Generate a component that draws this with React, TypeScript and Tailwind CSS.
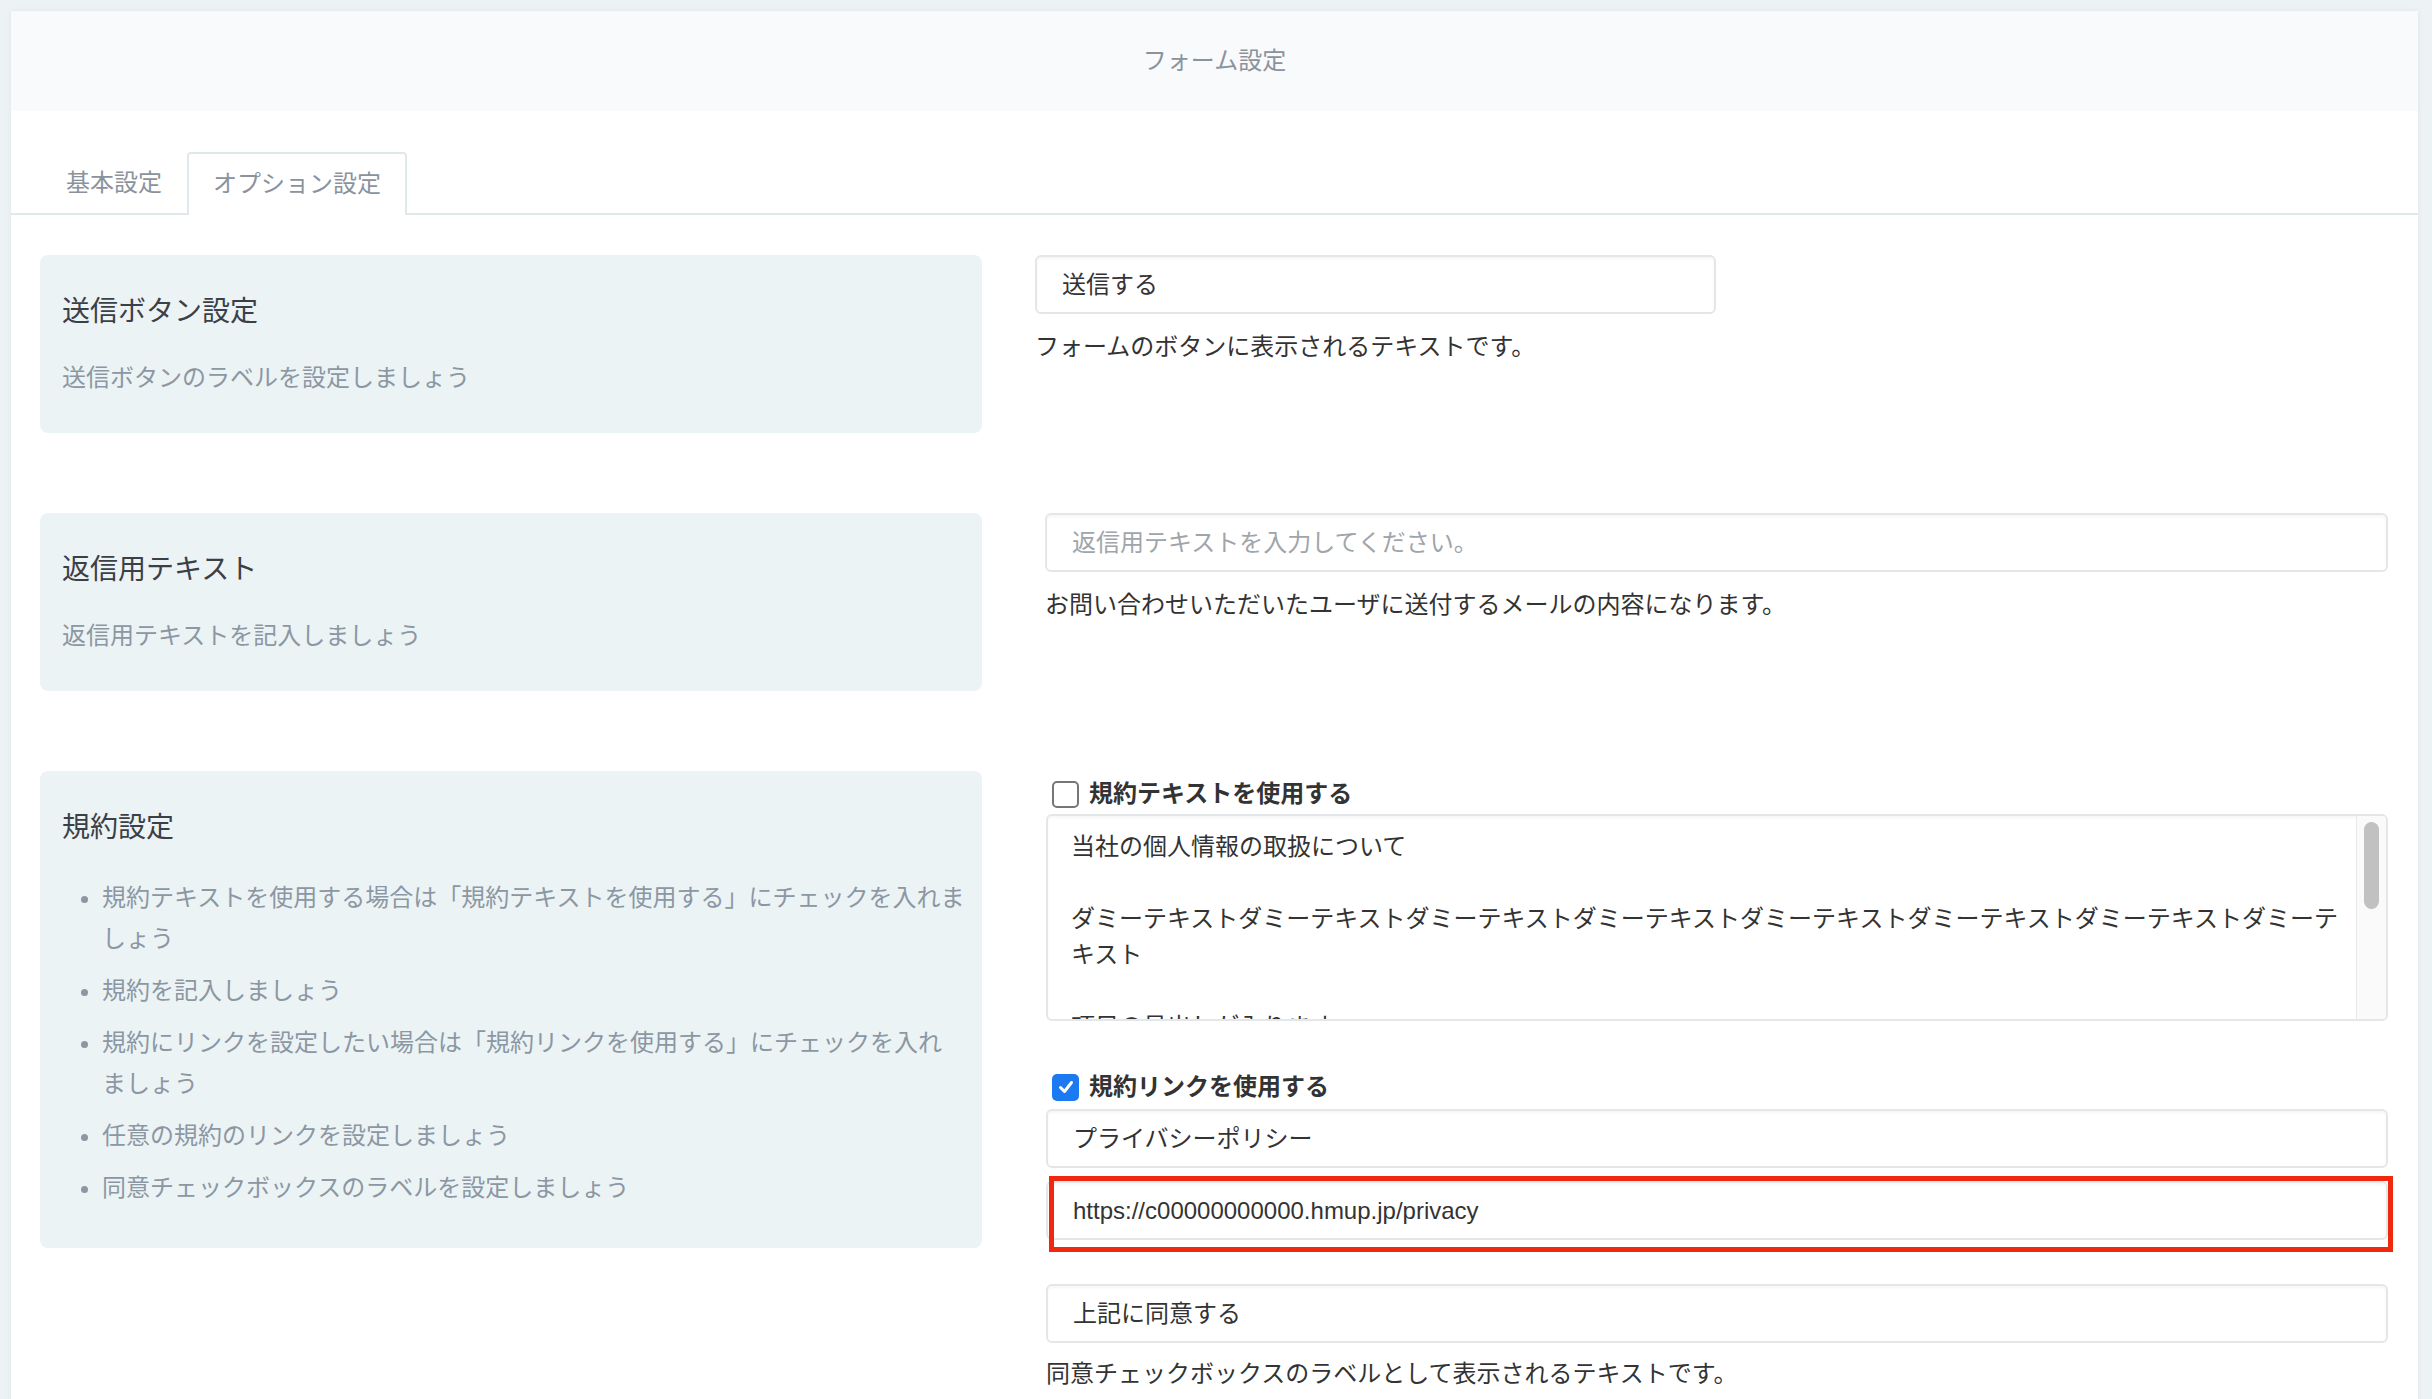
import React from "react";

const font = "font-['Liberation_Sans','Noto_Sans_CJK_JP',sans-serif]";

const inputCls =
	"h-[59px] flex items-center px-[25px] bg-white border-2 border-[#e4e7ea] rounded-[6px] shadow-[inset_0_2px_3px_rgba(0,0,0,0.04)] text-[24px] leading-[36px]";

function InfoBox({ title, children, height }: { title: string; children: React.ReactNode; height: string }) {
	return (
		<div className={`w-[942px] shrink-0 bg-[#ecf3f5] rounded-[8px] pl-[22px] pr-[12px] pt-[37px] ${height}`}>
			<h3 className="text-[28px] leading-[40px] text-[#3b4047]">{title}</h3>
			{children}
		</div>
	);
}

function Checkbox({ checked }: { checked?: boolean }) {
	if (checked) {
		return (
			<span className="w-[27px] h-[27px] rounded-[5px] bg-[#1b79f2] flex items-center justify-center shrink-0">
				<svg width="18" height="18" viewBox="0 0 18 18">
					<path d="M3.5 9.5 L7.5 13.5 L14.5 4.5" fill="none" stroke="white" strokeWidth="3" strokeLinecap="round" strokeLinejoin="round" />
				</svg>
			</span>
		);
	}
	return <span className="w-[27px] h-[27px] rounded-[5px] border-2 border-[#767676] bg-white shrink-0" />;
}

export default function App() {
	const bullets: React.ReactNode[] = [
		"規約テキストを使用する場合は「規約テキストを使用する」にチェックを入れましょう",
		"規約を記入しましょう",
		<>
			規約にリンクを設定したい場合は「規約リンクを使用する」にチェックを入れ<span className="whitespace-nowrap">ましょう</span>
		</>,
		"任意の規約のリンクを設定しましょう",
		"同意チェックボックスのラベルを設定しましょう",
	];

	return (
		<div className={`min-h-screen bg-[#edf3f5] pt-[11px] pl-[11px] pr-[14px] ${font}`}>
			<div className="bg-white shadow-[0_0_6px_rgba(0,0,0,0.06)] pb-[40px]">
				{/* ヘッダー */}
				<div className="h-[100px] bg-[#f8fafb] flex items-center justify-center text-[24px] text-[#8a939c]">フォーム設定</div>

				{/* タブ */}
				<div className="flex items-end px-[30px] pt-[41px] border-b-2 border-[#e1e8eb]">
					<div className="h-[61px] px-[25px] flex items-center text-[24px] text-[#8a939c]">基本設定</div>
					<div className="h-[63px] -mb-[2px] px-[24px] pb-[2px] flex items-center bg-white border-x-2 border-t-2 border-[#e1e8eb] rounded-t-[4px] text-[24px] text-[#8a939c]">
						オプション設定
					</div>
				</div>

				<div className="pl-[29px] pr-[30px] pt-[40px]">
					{/* 送信ボタン設定 */}
					<div className="flex items-start">
						<InfoBox title="送信ボタン設定" height="h-[178px]">
							<p className="mt-[28px] text-[24px] leading-[36px] text-[#8b97a3]">送信ボタンのラベルを設定しましょう</p>
						</InfoBox>
						<div className="ml-[53px]">
							<div className={`w-[681px] text-[#333] ${inputCls}`}>送信する</div>
							<p className="mt-[15px] text-[24px] leading-[36px] text-[#333]">フォームのボタンに表示されるテキストです。</p>
						</div>
					</div>

					{/* 返信用テキスト */}
					<div className="flex items-start mt-[80px]">
						<InfoBox title="返信用テキスト" height="h-[178px]">
							<p className="mt-[28px] text-[24px] leading-[36px] text-[#8b97a3]">返信用テキストを記入しましょう</p>
						</InfoBox>
						<div className="ml-[63px] flex-1">
							<div className={`text-[#a0a5aa] ${inputCls}`}>返信用テキストを入力してください。</div>
							<p className="mt-[15px] text-[24px] leading-[36px] text-[#333]">お問い合わせいただいたユーザに送付するメールの内容になります。</p>
						</div>
					</div>

					{/* 規約設定 */}
					<div className="flex items-start mt-[80px]">
						<InfoBox title="規約設定" height="h-[477px]">
							<ul className="mt-[29px] pl-[40px] list-disc text-[24px] leading-[41px] text-[#8b97a3] space-y-[11px] marker:text-[#8b97a3]">
								{bullets.map((b, i) => (
									<li key={i}>{b}</li>
								))}
							</ul>
						</InfoBox>
						<div className="ml-[64px] flex-1">
							<label className="mt-[5px] h-[36px] flex items-center gap-[10px] pl-[6px] text-[24px] font-bold text-[#333]">
								<Checkbox />
								規約テキストを使用する
							</label>
							<div className="mt-[2px] h-[207px] flex bg-white border-2 border-[#e4e7ea] rounded-[6px] shadow-[inset_0_2px_3px_rgba(0,0,0,0.04)] overflow-hidden">
								<div className="flex-1 pl-[23px] pr-[8px] pt-[13px] text-[24px] leading-[36px] text-[#333] overflow-hidden">
									<p>当社の個人情報の取扱について</p>
									<p>&nbsp;</p>
									<p>ダミーテキストダミーテキストダミーテキストダミーテキストダミーテキストダミーテキストダミーテキストダミーテキスト</p>
									<p>&nbsp;</p>
									<p>項目の見出しが入ります</p>
								</div>
								<div className="w-[30px] shrink-0 bg-[#fafafa] border-l border-[#e8e8e8] pt-[6px] flex justify-center">
									<div className="w-[15px] h-[87px] rounded-full bg-[#c1c1c1]" />
								</div>
							</div>

							<label className="mt-[48px] h-[36px] flex items-center gap-[10px] pl-[6px] text-[24px] font-bold text-[#333]">
								<Checkbox checked />
								規約リンクを使用する
							</label>
							<div className={`mt-[4px] text-[#333] ${inputCls}`}>プライバシーポリシー</div>
							<div className="relative mt-[13px]">
								<div className={`text-[#333] ${inputCls}`}>https://c00000000000.hmup.jp/privacy</div>
								<div className="absolute left-[3px] -right-[5px] -top-[5px] -bottom-[12px] border-[5px] border-[#f0280f] pointer-events-none" />
							</div>
							<div className={`mt-[44px] text-[#333] ${inputCls}`}>上記に同意する</div>
							<p className="mt-[13px] text-[24px] leading-[36px] text-[#333]">同意チェックボックスのラベルとして表示されるテキストです。</p>
						</div>
					</div>
				</div>
			</div>
		</div>
	);
}
